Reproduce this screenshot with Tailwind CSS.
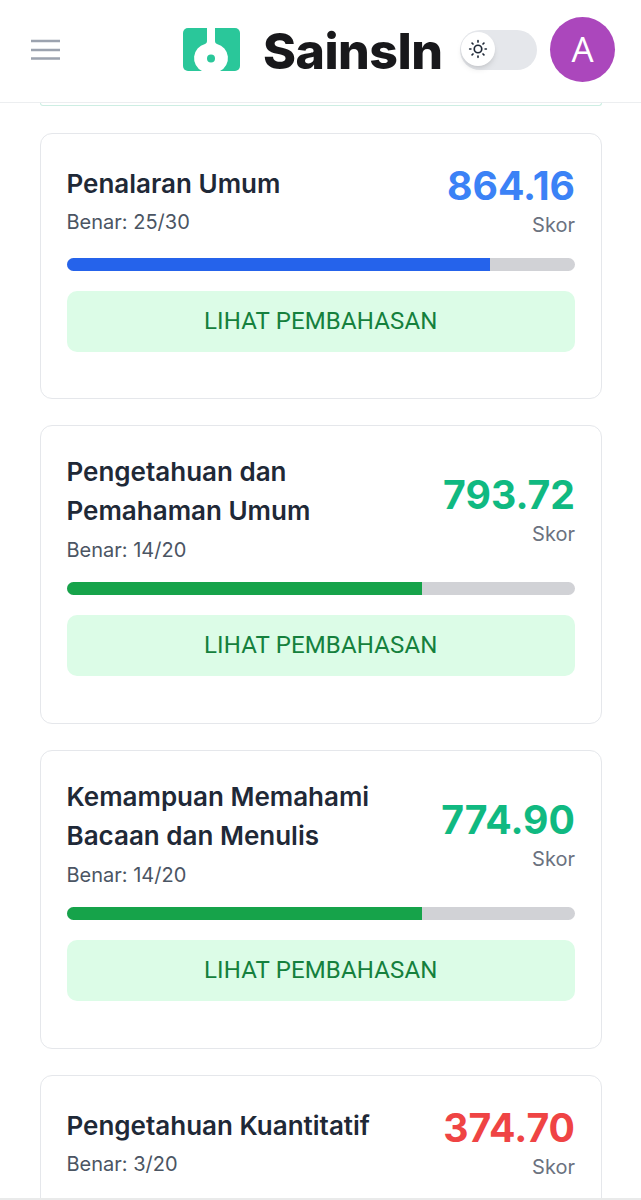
<!DOCTYPE html>
<html><head><meta charset="utf-8"><script src="https://cdn.jsdelivr.net/npm/@tailwindcss/browser@4"></script></head>
<body class="bg-white font-['Inter',sans-serif]">
<div class="w-[641px] h-[1200px] overflow-hidden relative">
  <header class="h-[103px] border-b border-[#eceef0] bg-white relative">
    <svg class="absolute left-[30px] top-[39px]" width="31" height="22" viewBox="0 0 31 22"><path d="M1 2h29M1 11h29M1 19.500h29" stroke="#9CA3AF" stroke-width="2.400" fill="none"/></svg>
    <div class="absolute left-[183px] top-[17px] flex items-center gap-[23px] h-[65px]">
      <svg class="mt-[-1px]" width="57" height="43" viewBox="0 0 57 43">
        <rect width="57" height="43" rx="5" fill="#2AC79A"/>
        <path d="M24 0h8v13c0 1.500 .8 2.500 2 3a14.500 14.500 0 0 1 3 27H19a14.500 14.500 0 0 1 3-27c1.200-.5 2-1.500 2-3z" fill="#fff"/>
        <circle cx="28" cy="30.500" r="4" fill="#2AC79A"/>
      </svg>
      <span class="text-[50px] font-extrabold leading-none text-[#18181b] tracking-[-0.5px] mt-[3px]">SainsIn</span>
    </div>
    <div class="absolute left-[460px] top-[30px] w-[77px] h-[40px] rounded-full bg-[#e5e7eb]">
      <div class="w-[34px] h-[34px] ml-[1px] mt-[2px] rounded-full bg-white shadow-md flex items-center justify-center">
        <svg width="20" height="20" viewBox="0 0 24 24" fill="none" stroke="#1f2937" stroke-width="2" stroke-linecap="round"><circle cx="12" cy="12" r="4.500"/><path d="M12 2v1.500M12 20.500v1.500M4.900 4.900l1.100 1.100M18 18l1.100 1.100M2 12h1.500M20.500 12h1.500M4.900 19.100l1.100-1.100M18 6l1.100-1.100"/></svg>
      </div>
    </div>
    <div class="absolute left-[550px] top-[17px] w-[65px] h-[65px] rounded-full bg-[#ab47bc] flex items-center justify-center text-white text-[35px] font-['Open_Sans',sans-serif]">A</div>
  </header>
  <main class="pl-[39.500px] pr-[39px]">
    <div class="h-[3px] rounded-b-[8px] border-x border-b border-[#cdeee3] bg-white"></div>
    <div class="flex flex-col gap-[26px] mt-[27px]">

      <section class="border border-[#e5e7eb] rounded-[12px] h-[266px] pl-[26px] pr-[26px] pt-[27px]">
        <div class="flex items-start justify-between h-[97px]">
          <div class="pt-[3px]">
            <h3 class="text-[26px] leading-[39px] font-semibold text-[#1f2937]">Penalaran Umum</h3>
            <p class="text-[20px] leading-[30px] mt-[4px] text-[#4b5563]">Benar: 25/30</p>
          </div>
          <div class="text-right">
            <div class="text-[39.200px] leading-[50px] font-bold text-[#3b82f6]">864.16</div>
            <div class="text-[20px] leading-[28px] text-[#6b7280]">Skor</div>
          </div>
        </div>
        <div class="h-[13px] rounded-full bg-[#d1d2d6] overflow-hidden"><div class="h-full bg-[#2563eb]" style="width:83.33%"></div></div>
        <div class="mt-[20px] h-[61px] pb-[2px] rounded-[10px] bg-[#dcfce7] flex items-center justify-center text-[24px] font-normal tracking-[0.15px] text-[#15803d] font-['Roboto',sans-serif]">LIHAT PEMBAHASAN</div>
      </section>

      <section class="border border-[#e5e7eb] rounded-[12px] h-[299px] pl-[26px] pr-[26px] pt-[27px]">
        <div class="flex items-center justify-between h-[112px] mb-[17px]">
          <div>
            <h3 class="text-[26px] leading-[39px] font-semibold text-[#1f2937] mt-[-1px]">Pengetahuan dan<br>Pemahaman Umum</h3>
            <p class="text-[20px] leading-[30px] mt-[5px] text-[#4b5563]">Benar: 14/20</p>
          </div>
          <div class="text-right">
            <div class="text-[39.200px] leading-[50px] font-bold text-[#10b981]">793.72</div>
            <div class="text-[20px] leading-[28px] text-[#6b7280]">Skor</div>
          </div>
        </div>
        <div class="h-[13px] rounded-full bg-[#d1d2d6] overflow-hidden"><div class="h-full bg-[#16a34a]" style="width:70%"></div></div>
        <div class="mt-[20px] h-[61px] pb-[2px] rounded-[10px] bg-[#dcfce7] flex items-center justify-center text-[24px] font-normal tracking-[0.15px] text-[#15803d] font-['Roboto',sans-serif]">LIHAT PEMBAHASAN</div>
      </section>

      <section class="border border-[#e5e7eb] rounded-[12px] h-[299px] pl-[26px] pr-[26px] pt-[27px]">
        <div class="flex items-center justify-between h-[112px] mb-[17px]">
          <div>
            <h3 class="text-[26px] leading-[39px] font-semibold text-[#1f2937] mt-[-1px]">Kemampuan Memahami<br>Bacaan dan Menulis</h3>
            <p class="text-[20px] leading-[30px] mt-[5px] text-[#4b5563]">Benar: 14/20</p>
          </div>
          <div class="text-right">
            <div class="text-[39.200px] leading-[50px] font-bold text-[#10b981]">774.90</div>
            <div class="text-[20px] leading-[28px] text-[#6b7280]">Skor</div>
          </div>
        </div>
        <div class="h-[13px] rounded-full bg-[#d1d2d6] overflow-hidden"><div class="h-full bg-[#16a34a]" style="width:70%"></div></div>
        <div class="mt-[20px] h-[61px] pb-[2px] rounded-[10px] bg-[#dcfce7] flex items-center justify-center text-[24px] font-normal tracking-[0.15px] text-[#15803d] font-['Roboto',sans-serif]">LIHAT PEMBAHASAN</div>
      </section>

      <section class="border border-[#e5e7eb] rounded-[12px] h-[266px] pl-[26px] pr-[26px] pt-[27px]">
        <div class="flex items-start justify-between h-[97px]">
          <div class="pt-[3px]">
            <h3 class="text-[26px] leading-[39px] font-semibold text-[#1f2937]">Pengetahuan Kuantitatif</h3>
            <p class="text-[20px] leading-[30px] mt-[4px] text-[#4b5563]">Benar: 3/20</p>
          </div>
          <div class="text-right">
            <div class="text-[39.200px] leading-[50px] font-bold text-[#ef4444]">374.70</div>
            <div class="text-[20px] leading-[28px] text-[#6b7280]">Skor</div>
          </div>
        </div>
      </section>
    </div>
  </main>
  <div class="absolute left-0 right-0 bottom-0 h-[2px] bg-[#e9eaea]"></div>
</div>
</body></html>
